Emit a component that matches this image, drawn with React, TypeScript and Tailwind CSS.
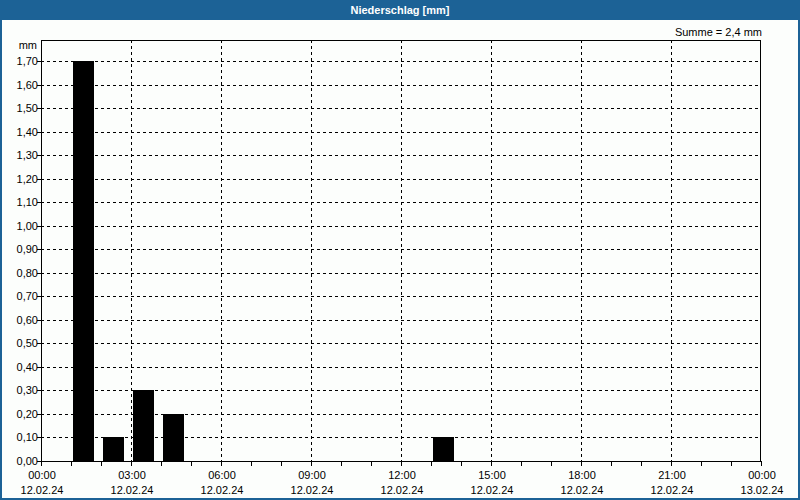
export default function App() {
  const x0 = 41, y0 = 461, yTop = 40, xr = 760;
  const py = (v: number) => y0 - v * 235.3;
  const yVals = Array.from({ length: 18 }, (_, i) => i / 10);
  const bars: [number, number][] = [[1, 1.7], [2, 0.1], [3, 0.3], [4, 0.2], [13, 0.1]];
  const f = "'Liberation Sans', Arial, sans-serif";
  return (
    <div className="w-[800px] h-[500px] bg-[#1c6296] flex flex-col" style={{ fontFamily: f }}>
      <div className="h-[20px] flex items-center justify-center text-white text-[11px] font-bold">Niederschlag [mm]</div>
      <div className="flex-1 mx-[2px] mb-[2px] bg-[#fcfefc] relative">
        <svg width="796" height="478" className="block" style={{ marginTop: 0 }}>
          <g transform="translate(-2,-20)" fontFamily={f} fontSize="11" fill="#000">
            {yVals.slice(1).map(v => (
              <line key={v} x1={x0} x2={xr} y1={Math.round(py(v)) + 0.5} y2={Math.round(py(v)) + 0.5} stroke="#000" strokeDasharray="3,3" />
            ))}
            {Array.from({ length: 7 }, (_, i) => x0 + 90 * (i + 1)).map(x => (
              <line key={x} x1={x + 0.5} x2={x + 0.5} y1={yTop} y2={y0} stroke="#000" strokeDasharray="3,3" />
            ))}
            {bars.map(([h, v]) => (
              <rect key={h} x={x0 + 30 * h + 2} y={Math.round(py(v))} width={21} height={y0 - Math.round(py(v))} fill="#000" />
            ))}
            <rect x={x0 + 0.5} y={yTop + 0.5} width={xr - x0} height={y0 - yTop} fill="none" stroke="#000" />
            {Array.from({ length: 25 }, (_, i) => x0 + 30 * i).map(x => (
              <line key={x} x1={x + 0.5} x2={x + 0.5} y1={y0} y2={y0 + 5} stroke="#000" />
            ))}
            {yVals.map(v => (
              <g key={v}>
                <line x1={x0 - 4} x2={x0} y1={Math.round(py(v)) + 0.5} y2={Math.round(py(v)) + 0.5} stroke="#000" />
                <text x={x0 - 3} y={Math.round(py(v)) + 4} textAnchor="end">{v.toFixed(2).replace(".", ",")}</text>
              </g>
            ))}
            <text x={x0 - 4} y={49} textAnchor="end">mm</text>
            <text x={762} y={36} textAnchor="end">Summe = 2,4 mm</text>
            {Array.from({ length: 9 }, (_, i) => i).map(i => (
              <g key={i}>
                <text x={x0 + 90 * i + 1} y={479} textAnchor="middle">{String((i * 3) % 24).padStart(2, "0")}:00</text>
                <text x={x0 + 90 * i + 1} y={494} textAnchor="middle">{i === 8 ? "13.02.24" : "12.02.24"}</text>
              </g>
            ))}
          </g>
        </svg>
      </div>
    </div>
  );
}
